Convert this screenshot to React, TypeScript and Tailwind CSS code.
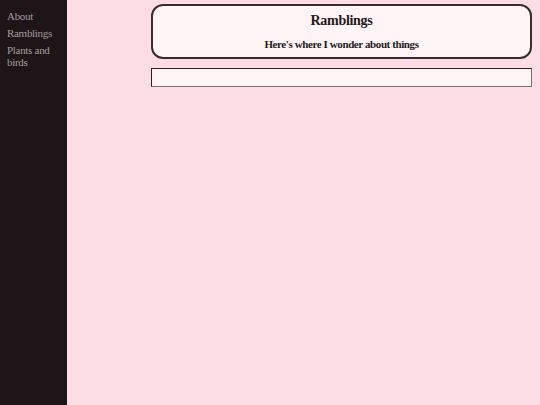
export default function App() {
  return (
    <div className="flex min-h-[405px] w-full bg-[#fddde4]" style={{ fontFamily: '"Liberation Serif", "Times New Roman", serif' }}>
      <nav className="w-[67px] shrink-0 bg-[#1e1518] px-[7px] pt-[10px]">
        <ul className="flex flex-col gap-[5px] text-[11px] leading-[12px] tracking-[-0.3px] text-[#a39a9d]">
          <li>About</li>
          <li>Ramblings</li>
          <li>Plants and birds</li>
        </ul>
      </nav>
      <main className="flex flex-1 flex-col gap-[9px] pl-[84px] pr-[8px] pt-[4px]">
        <header className="flex h-[55px] flex-col items-center rounded-[12px] border-2 border-[#3b2b30] bg-[#fff5f6] pt-[7px] text-[#231a1d]">
          <h1 className="text-[14px] font-bold leading-[16px] tracking-[-0.3px]">Ramblings</h1>
          <p className="mt-[9px] text-[11px] font-bold leading-[12px] tracking-[-0.4px]">Here's where I wonder about things</p>
        </header>
        <section className="h-[19px] border border-t-[#2b2024] border-l-[#2b2024] border-b-[#7a6e72] border-r-[#7a6e72] bg-[#fff5f6]" />
      </main>
    </div>
  );
}
